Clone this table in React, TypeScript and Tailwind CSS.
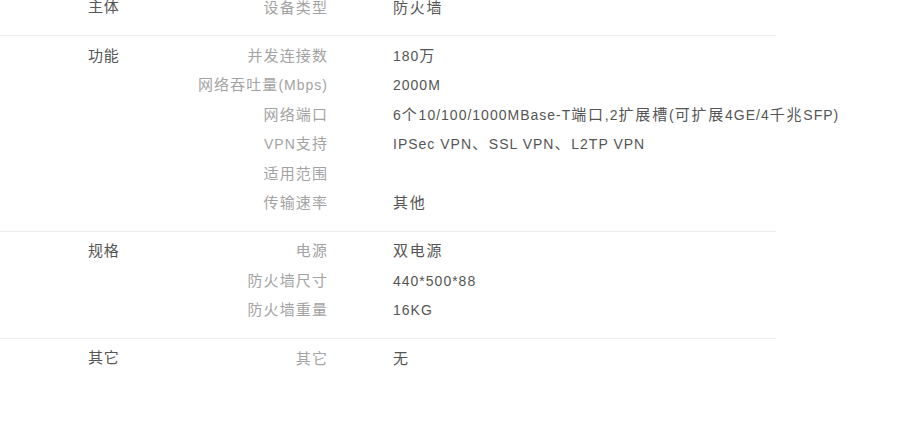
const sections: { title: string; rows: [string, string][] }[] = [
  { title: "主体", rows: [["设备类型", "防火墙"]] },
  {
    title: "功能",
    rows: [
      ["并发连接数", "180万"],
      ["网络吞吐量(Mbps)", "2000M"],
      ["网络端口", "6个10/100/1000MBase-T端口,2扩展槽(可扩展4GE/4千兆SFP)"],
      ["VPN支持", "IPSec VPN、SSL VPN、L2TP VPN"],
      ["适用范围", ""],
      ["传输速率", "其他"],
    ],
  },
  {
    title: "规格",
    rows: [
      ["电源", "双电源"],
      ["防火墙尺寸", "440*500*88"],
      ["防火墙重量", "16KG"],
    ],
  },
  { title: "其它", rows: [["其它", "无"]] },
];

// CJK glyphs in the original sit a little wider than Latin ones
const Txt = ({ text, cjk }: { text: string; cjk: string }) => (
  <>
    {text.split(/([\u3000-\u9fff\uff00-\uffef]+)/).map((part, i) =>
      i % 2 === 1 ? (
        <span key={i} className={cjk}>
          {part}
        </span>
      ) : (
        part
      )
    )}
  </>
);

const App = () => {
  return (
    <div
      className="w-[901px] h-[429px] overflow-hidden bg-white text-[14px] tracking-[1px]"
      style={{ fontFamily: '"Liberation Sans", "Noto Sans CJK SC", sans-serif' }}
    >
      <div className="w-[776px] -mt-[12px]">
        {sections.map((s, i) => (
          <div
            key={s.title}
            className={`flex pt-[5px] pb-[13px] ${i < sections.length - 1 ? "border-b border-[#ececec]" : ""}`}
          >
            <div className="w-[88px] shrink-0" />
            <div className="w-[80px] shrink-0 h-[29.4px] flex items-center text-[#555] text-[15px] tracking-[0.8px]">
              {s.title}
            </div>
            <div className="flex flex-col">
              {s.rows.map(([k, v]) => (
                <div key={k} className="flex h-[29.4px] items-center">
                  <div className="w-[160px] text-right text-[#a3a3a3] leading-[20px]">
                    <Txt text={k} cjk="text-[15px] tracking-[1.1px]" />
                  </div>
                  <div className="pl-[65px] text-[#555] whitespace-nowrap leading-[20px]">
                    <Txt text={v} cjk="text-[15px] tracking-[1.8px]" />
                  </div>
                </div>
              ))}
            </div>
          </div>
        ))}
      </div>
    </div>
  );
};

export default App;
